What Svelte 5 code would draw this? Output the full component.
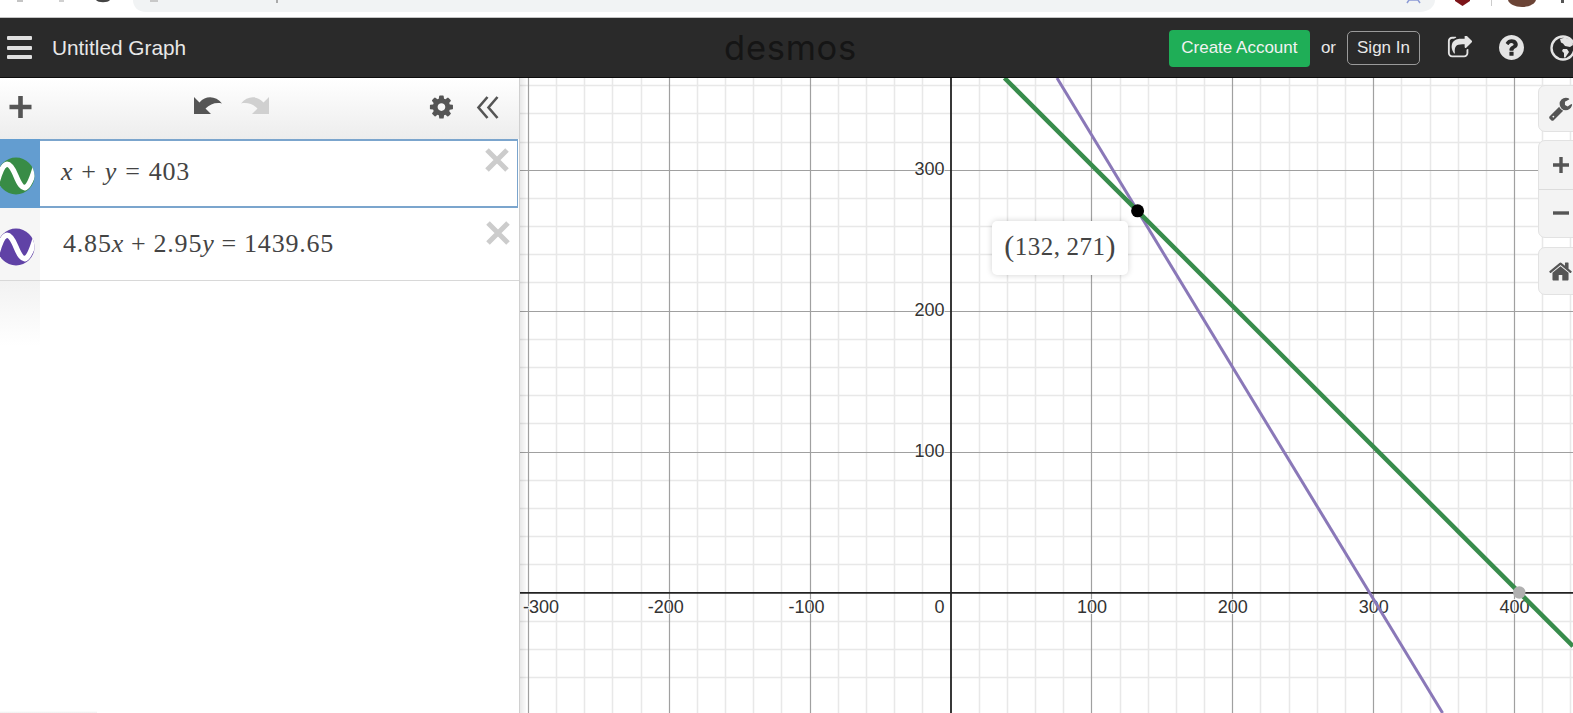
<script>
  const X0 = 951, Y0 = 592.9, U = 140.9;
  const L = 520, T = 78, R = 1573, B = 713;
  const px = (v) => X0 + v * U / 100;
  const py = (v) => Y0 - v * U / 100;
  const snap = (n) => Math.round(n - 0.5) + 0.5;

  const minorX = [];
  for (let i = -15; i <= 22; i++) if (i % 5 !== 0) minorX.push(snap(X0 + (i * U) / 5));
  const minorY = [];
  for (let i = -3; i <= 18; i++) if (i % 5 !== 0) minorY.push(snap(Y0 - (i * U) / 5));
  const majorX = [-300, -200, -100, 100, 200, 300, 400].map(px).map(snap);
  const majorY = [100, 200, 300].map(py).map(snap);

  const xLabels = [
    { t: '-300', x: 559, a: 'end' },
    { t: '-200', x: px(-200) + 14.5, a: 'end' },
    { t: '-100', x: px(-100) + 14.5, a: 'end' },
    { t: '0', x: 944.5, a: 'end' },
    { t: '100', x: px(100), a: 'middle' },
    { t: '200', x: px(200), a: 'middle' },
    { t: '300', x: px(300), a: 'middle' },
    { t: '400', x: px(400), a: 'middle' }
  ];
  const yLabels = [100, 200, 300];
</script>

{#snippet wave(color, id)}
  <svg class="wave" viewBox="0 0 40 40" aria-hidden="true">
    <clipPath id={id}><circle cx="16" cy="20" r="18.5" /></clipPath>
    <circle cx="16" cy="20" r="18.5" fill={color} />
    <path clip-path="url(#{id})" d="M-4 30C3 3 9 3 16 20S28 37 36 9" fill="none" stroke="#fff" stroke-width="5.500" />
  </svg>
{/snippet}

{#snippet cross()}
  <svg class="cross" viewBox="0 0 24 24" aria-hidden="true">
    <path d="M2 2L22 22M22 2L2 22" fill="none" stroke="#ccc" stroke-width="5" />
  </svg>
{/snippet}

<div class="page">
  <div class="chrome">
    <svg class="chrome-art" viewBox="0 0 1573 17" aria-hidden="true">
      <path d="M133 0H1435C1435 7 1428 12 1420 12H146C138 12 133 7 133 0Z" fill="#f1f3f4" />
      <rect x="17" y="0" width="6" height="2" fill="#c4c4c4" />
      <rect x="59" y="0" width="5" height="2" fill="#d0d0d0" />
      <path d="M96 0H110C108 3 98 3 96 0Z" fill="#444" />
      <rect x="150" y="0" width="8" height="2" fill="#c8c8c8" />
      <rect x="276" y="0" width="2" height="3" fill="#aaa" />
      <path d="M1407 3L1409 0H1418L1420 3" fill="none" stroke="#8c9bd6" stroke-width="1.500" />
      <path d="M1455 0H1470V1L1462.500 6L1455 1Z" fill="#7c1418" />
      <rect x="1491" y="0" width="1" height="6" fill="#ccc" />
      <path d="M1508 0H1536C1535 4 1529 7 1522 7C1515 7 1509 4 1508 0Z" fill="#6b4436" />
      <rect x="1561" y="0" width="3" height="3" fill="#555" />
    </svg>
  </div>

  <header class="topbar">
    <div class="left">
      <div class="burger"><span></span><span></span><span></span></div>
      <span class="title">Untitled Graph</span>
    </div>
    <div class="logo">desmos</div>
    <div class="right">
      <button class="create">Create Account</button>
      <span class="or">or</span>
      <button class="signin">Sign In</button>
      <svg class="hicon share" viewBox="0 128 1792 1536" aria-hidden="true"><path fill="#e4e4e4" d="M1472 989v259q0 119-84.5 203.5t-203.5 84.5h-832q-119 0-203.5-84.5t-84.5-203.5v-832q0-119 84.5-203.5t203.5-84.5h255q13 0 22.5 9.5t9.5 22.5q0 27-26 32-77 26-133 60-10 4-16 4h-112q-66 0-113 47t-47 113v832q0 66 47 113t113 47h832q66 0 113-47t47-113v-214q0-19 18-29 28-13 54-37 16-16 35-8 21 9 21 29zm237-496l-384 384q-18 19-45 19-12 0-25-5-39-17-39-59v-192h-160q-323 0-438 131-119 137-74 473 3 23-20 34-8 2-12 2-16 0-26-13-10-14-21-31t-39.5-68.5-49.5-99.5-38.5-114-17.5-122q0-49 3.5-91t14-90 28-88 47-81.5 68.5-74 94.5-61.5 124.5-48.5 159.5-30.5 196.5-11h160v-192q0-42 39-59 13-5 25-5 26 0 45 19l384 384q19 19 19 45t-19 45z" /></svg>
      <svg class="hicon help" viewBox="128 128 1536 1536" aria-hidden="true"><path fill="#e4e4e4" d="M1024 1376v-192q0-14-9-23t-23-9h-192q-14 0-23 9t-9 23v192q0 14 9 23t23 9h192q14 0 23-9t9-23zm256-672q0-88-55.5-163t-138.5-116-170-41q-243 0-371 213-15 24 8 42l132 100q7 6 19 6 16 0 25-12 53-68 86-92 34-24 86-24 48 0 85.5 26t37.5 59q0 38-20 61t-68 45q-63 28-115.5 86.5t-52.5 125.5v36q0 14 9 23t23 9h192q14 0 23-9t9-23q0-19 21.5-49.5t54.5-49.5q32-18 49-28.5t46-35 44.5-48 28-60.5 12.5-81zm384 192q0 209-103 385.5t-279.5 279.5-385.5 103-385.5-103-279.5-279.5-103-385.5 103-385.5 279.5-279.5 385.5-103 385.5 103 279.5 279.5 103 385.5z" /></svg>
      <svg class="hicon globe" viewBox="0 0 26 26" aria-hidden="true">
        <circle cx="13" cy="13" r="11.500" fill="#2a2a2a" stroke="#e4e4e4" stroke-width="2.400" />
        <path fill="#e4e4e4" d="M10 4L15 2.500L21 5L23 10L20 12L15 11L13 8.500L11 7.500ZM13 14L17 14L19 17L15 23L14 22L14 18L12 16Z" />
      </svg>
    </div>
  </header>

  <main class="workspace">
    <section class="panel">
      <div class="toolbar">
        <svg class="tool-art" viewBox="0 78 520 61" aria-hidden="true">
          <path d="M9.500 107H31.500M20.500 96V118" stroke="#555" stroke-width="4.600" fill="none" />
          <path d="M194 97V114H211L205.500 108.500C210 104 216 102 222 103.500C216 96 206 95 199.500 102.500Z" fill="#555" />
          <path d="M269 97V114H252L257.500 108.500C253 104 247 102 241 103.500C247 96 257 95 263.500 102.500Z" fill="#d0d0d0" />
          <g transform="translate(428 93.600) scale(0.015)">
            <path fill="#555" d="M1152 896q0-106-75-181t-181-75-181 75-75 181 75 181 181 75 181-75 75-181zm512-109v222q0 12-8 23t-20 13l-185 28q-19 54-39 91 35 50 107 138 10 12 10 25t-9 23q-27 37-99 108t-94 71q-12 0-26-9l-138-108q-44 23-91 38-16 136-29 186-7 28-36 28h-222q-14 0-24.500-8.500t-11.500-21.500l-28-184q-49-16-90-37l-141 107q-10 9-25 9-14 0-25-11-126-114-165-168-7-10-7-23 0-12 8-23 15-21 51-66.500t54-70.500q-27-50-41-99l-183-27q-13-2-21-12.500t-8-23.500v-222q0-12 8-23t19-13l186-28q14-46 39-92-40-57-107-138-10-12-10-24 0-10 9-23 26-36 98.500-107.500t94.500-71.500q13 0 26 10l138 107q44-23 91-38 16-136 29-186 7-28 36-28h222q14 0 24.500 8.500t11.500 21.500l28 184q49 16 90 37l142-107q9-9 24-9 13 0 25 10 129 119 165 170 7 8 7 22 0 12-8 23-15 21-51 66.500t-54 70.500q26 50 41 98l183 28q13 2 21 12.500t8 23.500z" />
          </g>
          <path d="M487.500 97L478.500 107.500L487.500 118M497.500 97L488.500 107.500L497.500 118" fill="none" stroke="#555" stroke-width="2.600" />
        </svg>
      </div>

      <div class="row focused">
        <div class="gutter">{@render wave('#388c46', 'clip-a')}</div>
        <div class="math first"><i>x</i><span class="op">+</span><i>y</i><span class="op">=</span>403</div>
        {@render cross()}
      </div>

      <div class="row plain">
        <div class="gutter">{@render wave('#6042a6', 'clip-b')}</div>
        <div class="math second">4.85<i>x</i><span class="op">+</span>2.95<i>y</i><span class="op">=</span>1439.65</div>
        {@render cross()}
      </div>

      <div class="row empty"><div class="gutter fade"></div></div>
      <div class="foot"></div>
    </section>

    <section class="graph">
      <svg class="plot" viewBox="{L} {T} {R - L} {B - T}" aria-label="Graph">
        <g stroke="#e8e8e8" stroke-width="1.500">
          {#each minorX as x}<line x1={x} x2={x} y1={T} y2={B} />{/each}
          {#each minorY as y}<line x1={L} x2={R} y1={y} y2={y} />{/each}
        </g>
        <g stroke="#a0a0a0" stroke-width="1.200">
          {#each majorX as x}<line x1={x} x2={x} y1={T} y2={B} />{/each}
          {#each majorY as y}<line x1={L} x2={R} y1={y} y2={y} />{/each}
        </g>
        <g stroke="#222" stroke-width="1.800">
          <line x1={X0} x2={X0} y1={T} y2={B} />
          <line x1={L} x2={R} y1={Y0} y2={Y0} />
        </g>
        <g class="labels">
          {#each xLabels as l}<text x={l.x} y="613" text-anchor={l.a}>{l.t}</text>{/each}
          {#each yLabels as v}<text x="944.500" y={py(v) + 5} text-anchor="end">{v}</text>{/each}
        </g>
        <line x1="1057" y1={T} x2="1442.600" y2={B} stroke="#8a78b8" stroke-width="3" />
        <line x1="1004.500" y1={T} x2={R} y2="646.200" stroke="#388c4c" stroke-width="4.500" />
        <circle cx="1519.300" cy="592.500" r="6.200" fill="#b0b0b0" />
        <circle cx="1137.600" cy="210.800" r="6.500" fill="#000" />
      </svg>

      <div class="edge"></div>

      <div class="tip"><span class="paren">(</span>132<span class="comma">,</span>271<span class="paren">)</span></div>

      <div class="tools">
        <div class="tool-group wrench">
          <svg viewBox="0 0 1792 1792" class="ti" aria-hidden="true"><path fill="#555" d="M448 1472q0-26-19-45t-45-19-45 19-19 45 19 45 45 19 45-19 19-45zm644-420l-682 682q-37 37-90 37-52 0-91-37l-106-108q-38-36-38-90 0-53 38-91l681-681q39 98 114.500 173.500t173.500 114.500zm634-435q0 39-23 106-47 134-164.500 217.500t-258.500 83.500q-185 0-316.500-131.500t-131.500-316.500 131.500-316.500 316.500-131.500q58 0 121.500 16.500t107.500 46.500q16 11 16 28t-16 28l-293 169v224l193 107q5-3 79-48.500t135.500-81 70.500-35.500q15 0 23.500 10t8.500 25z" /></svg>
        </div>
        <div class="tool-group zoom">
          <div class="cell">
            <svg viewBox="0 0 20 20" class="pm" aria-hidden="true"><path d="M2 10H18M10 2V18" stroke="#555" stroke-width="3.400" fill="none" /></svg>
          </div>
          <div class="cell second-cell">
            <svg viewBox="0 0 20 20" class="pm" aria-hidden="true"><path d="M2 10H18" stroke="#555" stroke-width="3.400" fill="none" /></svg>
          </div>
        </div>
        <div class="tool-group home">
          <svg viewBox="0 0 1792 1792" class="ti" aria-hidden="true"><path fill="#555" d="M1472 992v480q0 26-19 45t-45 19h-384v-384h-256v384h-384q-26 0-45-19t-19-45v-480q0-1 .5-3t.5-3l575-474 575 474q1 2 1 6zm223-69l-62 74q-8 9-21 11h-3q-13 0-21-7l-692-577-692 577q-12 8-24 7-13-2-21-11l-62-74q-8-10-7-23.500t11-21.500l719-599q32-26 76-26t76 26l244 204v-195q0-14 9-23t23-9h192q14 0 23 9t9 23v408l219 182q10 8 11 21.500t-7 23.500z" /></svg>
        </div>
      </div>
    </section>
  </main>
</div>

<style>
  :global(body) {
    margin: 0;
    background: #fff;
    overflow: hidden;
  }
  .page {
    width: 1573px;
    height: 713px;
    display: flex;
    flex-direction: column;
    overflow: hidden;
    font-family: 'Liberation Sans', Arial, sans-serif;
  }
  .chrome {
    height: 17px;
    flex: none;
    background: #fff;
    border-bottom: 1px solid #c4c4c4;
  }
  .chrome-art {
    display: block;
    width: 1573px;
    height: 17px;
  }
  .topbar {
    height: 59px;
    flex: none;
    background: #2a2a2a;
    border-bottom: 1px solid #0d0d0d;
    display: grid;
    grid-template-columns: 1fr auto 1fr;
    align-items: center;
    color: #e8e8e8;
  }
  .left {
    display: flex;
    align-items: center;
    padding-left: 7px;
  }
  .burger {
    width: 25px;
    display: flex;
    flex-direction: column;
    gap: 5.500px;
    margin-right: 20px;
  }
  .burger span {
    height: 4px;
    border-radius: 1px;
    background: #e0e0e0;
  }
  .title {
    font-size: 20.800px;
  }
  .logo {
    font-family: Inter, sans-serif;
    font-weight: 400;
    font-size: 34.500px;
    letter-spacing: 0.7px;
    line-height: 40px;
    color: #151515;
    position: relative;
    left: 4px;
  }
  .right {
    display: flex;
    align-items: center;
    justify-content: flex-end;
    margin-right: -3px;
  }
  button {
    font-family: inherit;
    padding: 0;
    cursor: pointer;
  }
  .create {
    width: 141px;
    height: 37px;
    margin-top: 1px;
    background: #1fae57;
    border: 0;
    border-radius: 4px;
    color: #f2f2f2;
    font-size: 17px;
  }
  .or {
    font-size: 17px;
    margin: 0 11px;
    color: #e8e8e8;
  }
  .signin {
    width: 73px;
    height: 34px;
    background: transparent;
    border: 1px solid #9a9a9a;
    border-radius: 5px;
    color: #e8e8e8;
    font-size: 17px;
  }
  .hicon {
    flex: none;
    display: block;
  }
  .share {
    width: 26px;
    height: 24px;
    margin-left: 27px;
  }
  .help {
    width: 25px;
    height: 25px;
    margin-left: 26px;
  }
  .globe {
    width: 26px;
    height: 26px;
    margin-left: 26px;
  }
  .workspace {
    flex: 1;
    display: flex;
    min-height: 0;
  }
  .panel {
    width: 520px;
    flex: none;
    background: #fff;
    border-right: 1px solid #d0d0d0;
    box-sizing: border-box;
    display: flex;
    flex-direction: column;
    position: relative;
  }
  .toolbar {
    height: 61px;
    flex: none;
    background: linear-gradient(#fff, #ededed);
  }
  .tool-art {
    display: block;
    width: 520px;
    height: 61px;
  }
  .row {
    display: flex;
    position: relative;
    box-sizing: border-box;
    flex: none;
  }
  .focused {
    height: 69px;
    border: solid #7ba5cd;
    border-width: 2px 1px 2px 0;
    margin-right: 1px;
  }
  .focused .gutter {
    background: #639dd0;
    margin: -2px 0;
    padding-top: 4px;
    box-sizing: border-box;
    width: 40px;
  }
  .plain {
    height: 73px;
    border-bottom: 1px solid #d8d8d8;
  }
  .plain .gutter {
    padding-top: 6px;
    box-sizing: border-box;
  }
  .empty {
    height: 65px;
  }
  .gutter {
    width: 40px;
    flex: none;
    display: flex;
    align-items: center;
    background: #f6f6f6;
  }
  .fade {
    background: linear-gradient(#f2f2f2, #fff);
  }
  .wave {
    width: 40px;
    height: 40px;
    display: block;
  }
  .math {
    font-family: 'Liberation Serif', 'Times New Roman', serif;
    font-size: 26px;
    color: #444;
    align-self: center;
    white-space: nowrap;
    letter-spacing: 0.8px;
  }
  .first {
    padding-left: 21px;
    padding-bottom: 3px;
  }
  .first .op {
    margin: 0 8px;
  }
  .second {
    padding-left: 23px;
  }
  .op {
    margin: 0 7px;
  }
  .cross {
    position: absolute;
    right: 9px;
    top: 13px;
    width: 24px;
    height: 24px;
  }
  .focused .cross {
    right: 8px;
    top: 7px;
  }
  .foot {
    position: absolute;
    left: 0;
    bottom: 0;
    width: 97px;
    height: 2px;
    background: linear-gradient(#fff, #f0f0f0);
  }
  .graph {
    flex: 1;
    position: relative;
    overflow: hidden;
    background: #fff;
  }
  .plot {
    display: block;
    width: 1053px;
    height: 635px;
  }
  .edge {
    position: absolute;
    left: 0;
    top: 0;
    bottom: 0;
    width: 6px;
    background: linear-gradient(90deg, rgba(0, 0, 0, 0.09), rgba(0, 0, 0, 0.02));
  }
  .labels text {
    font-family: 'Liberation Sans', Arial, sans-serif;
    font-size: 18px;
    fill: #333;
    stroke: #fff;
    stroke-width: 1.500px;
    paint-order: stroke;
  }
  .tip {
    position: absolute;
    left: 472px;
    top: 143px;
    width: 136px;
    height: 54px;
    box-sizing: border-box;
    padding-bottom: 2px;
    background: #fff;
    border-radius: 5px;
    box-shadow: 0 0 6px rgba(0, 0, 0, 0.18);
    display: flex;
    align-items: center;
    justify-content: center;
    font-family: 'Liberation Serif', 'Times New Roman', serif;
    font-size: 25px;
    color: #444;
    letter-spacing: 0.5px;
  }
  .paren {
    font-size: 30px;
    line-height: 1;
    margin-top: -3px;
  }
  .comma {
    margin-right: 6px;
  }
  .tools {
    position: absolute;
    left: 1018px;
    top: 7px;
    width: 47px;
    display: flex;
    flex-direction: column;
  }
  .tool-group {
    background: #f3f3f3;
    border: 1px solid #e2e2e2;
    border-radius: 7px;
    box-sizing: border-box;
    display: flex;
    flex-direction: column;
    align-items: center;
    justify-content: center;
  }
  .wrench {
    height: 47px;
  }
  .zoom {
    height: 98px;
    margin-top: 8px;
  }
  .home {
    height: 48px;
    margin-top: 9px;
  }
  .cell {
    height: 49px;
    width: 100%;
    display: flex;
    align-items: center;
    justify-content: center;
    box-sizing: border-box;
  }
  .second-cell {
    border-top: 1px solid #dcdcdc;
  }
  .ti {
    width: 25px;
    height: 25px;
    display: block;
    margin-right: 2px;
  }
  .pm {
    width: 20px;
    height: 20px;
    display: block;
    margin-right: 2px;
  }
</style>
